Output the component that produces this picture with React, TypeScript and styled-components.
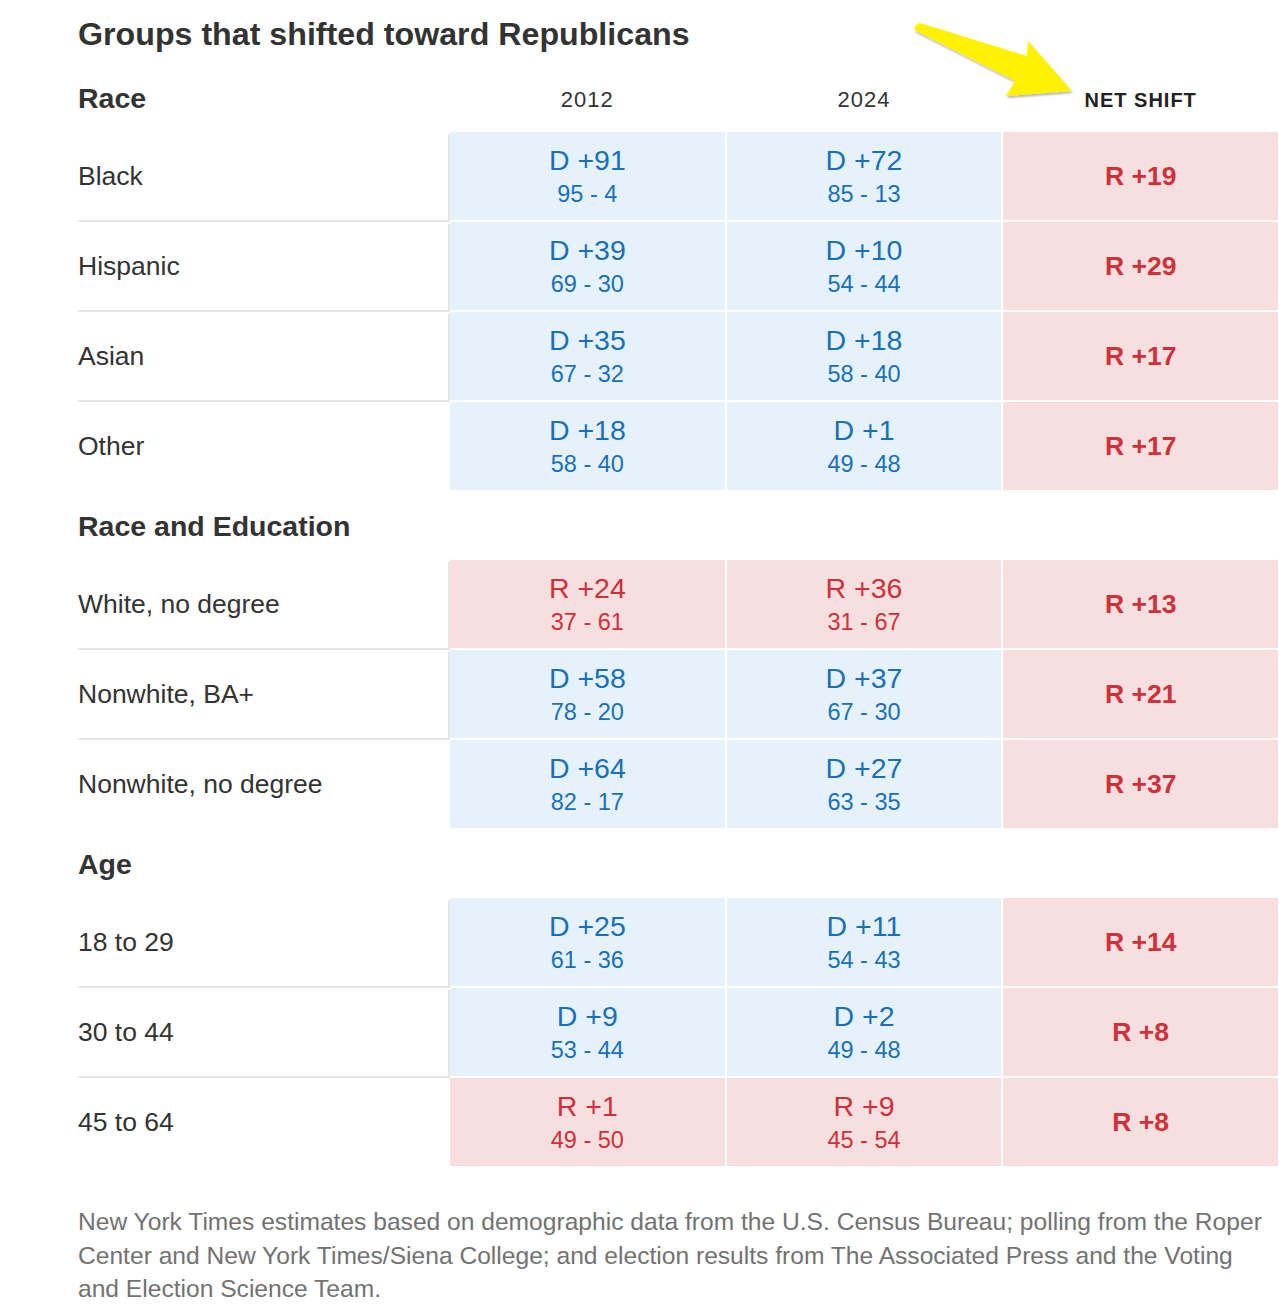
import React from "react";
import styled, { createGlobalStyle } from "styled-components";

const GlobalStyle = createGlobalStyle`
  html, body {
    margin: 0;
    padding: 0;
    background: #ffffff;
    overflow: hidden;
  }
  body {
    font-family: "Liberation Sans", Arial, sans-serif;
    color: #333333;
  }
`;

const BLUE = "#1a70b8";
const RED = "#cf3039";
const BLUE_BG = "#e5f2fb";
const RED_BG = "#f7dfe0";

type Party = "D" | "R";

const Page = styled.div`
  position: relative;
  box-sizing: border-box;
  width: 100%;
  padding: 0 1px 0 78px;
`;

const Title = styled.h1`
  margin: 0;
  padding-top: 14px;
  height: 62px;
  box-sizing: border-box;
  font-size: 32.2px;
  line-height: 40px;
  font-weight: 700;
  color: #333333;
`;

const Grid = styled.div`
  display: grid;
  grid-template-columns: 370px repeat(3, 1fr);
  column-gap: 2px;
`;

const HeaderRow = styled(Grid)`
  height: 70px;
`;

const GroupTitle = styled.h2`
  margin: 0;
  padding-top: 16px;
  font-size: 28.5px;
  line-height: 40px;
  font-weight: 700;
  color: #333333;
`;

const ColHead = styled.div<{ $strong?: boolean }>`
  padding-top: 18px;
  text-align: center;
  line-height: 40px;
  font-size: ${(p) => (p.$strong ? "20px" : "22px")};
  font-weight: ${(p) => (p.$strong ? 700 : 400)};
  letter-spacing: 1px;
  color: ${(p) => (p.$strong ? "#222222" : "#333333")};
`;

const Rows = styled.div`
  display: flex;
  flex-direction: column;
  gap: 2px;
`;

const DataRow = styled(Grid)`
  height: 88px;
`;

const Label = styled.div<{ $divider: boolean }>`
  display: flex;
  align-items: center;
  font-size: 26.5px;
  color: #333333;
  box-shadow: ${(p) =>
    p.$divider ? "0 2px 0 #e6e6e6, 2px 2px 0 #e6e6e6" : "none"};
`;

const Cell = styled.div<{ $party: Party }>`
  background: ${(p) => (p.$party === "D" ? BLUE_BG : RED_BG)};
  color: ${(p) => (p.$party === "D" ? BLUE : RED)};
  display: flex;
  flex-direction: column;
  align-items: center;
  padding-top: 10px;
  box-sizing: border-box;
`;

const Margin = styled.div`
  font-size: 28.5px;
  line-height: 36px;
`;

const Split = styled.div`
  margin-top: 2px;
  font-size: 23.5px;
  line-height: 28px;
`;

const NetCell = styled.div`
  background: ${RED_BG};
  color: ${RED};
  display: flex;
  align-items: center;
  justify-content: center;
  font-size: 26.5px;
  font-weight: 700;
`;

const Footer = styled.p`
  margin: 39px 0 0;
  font-size: 24.6px;
  line-height: 33.5px;
  color: #727272;
`;

const Arrow = styled.svg`
  position: absolute;
  left: 900px;
  top: 0;
  overflow: visible;
`;

type Result = { party: Party; margin: number; dem: number; rep: number };
type Row = { label: string; y2012: Result; y2024: Result; net: number };
type Group = { title: string; rows: Row[] };

const r = (party: Party, margin: number, dem: number, rep: number): Result => ({
  party,
  margin,
  dem,
  rep,
});

const groups: Group[] = [
  {
    title: "Race",
    rows: [
      { label: "Black", y2012: r("D", 91, 95, 4), y2024: r("D", 72, 85, 13), net: 19 },
      { label: "Hispanic", y2012: r("D", 39, 69, 30), y2024: r("D", 10, 54, 44), net: 29 },
      { label: "Asian", y2012: r("D", 35, 67, 32), y2024: r("D", 18, 58, 40), net: 17 },
      { label: "Other", y2012: r("D", 18, 58, 40), y2024: r("D", 1, 49, 48), net: 17 },
    ],
  },
  {
    title: "Race and Education",
    rows: [
      { label: "White, no degree", y2012: r("R", 24, 37, 61), y2024: r("R", 36, 31, 67), net: 13 },
      { label: "Nonwhite, BA+", y2012: r("D", 58, 78, 20), y2024: r("D", 37, 67, 30), net: 21 },
      { label: "Nonwhite, no degree", y2012: r("D", 64, 82, 17), y2024: r("D", 27, 63, 35), net: 37 },
    ],
  },
  {
    title: "Age",
    rows: [
      { label: "18 to 29", y2012: r("D", 25, 61, 36), y2024: r("D", 11, 54, 43), net: 14 },
      { label: "30 to 44", y2012: r("D", 9, 53, 44), y2024: r("D", 2, 49, 48), net: 8 },
      { label: "45 to 64", y2012: r("R", 1, 49, 50), y2024: r("R", 9, 45, 54), net: 8 },
    ],
  },
];

const ResultCell: React.FC<{ res: Result }> = ({ res }) => (
  <Cell $party={res.party}>
    <Margin>
      {res.party} +{res.margin}
    </Margin>
    <Split>
      {res.dem} - {res.rep}
    </Split>
  </Cell>
);

export default function App() {
  return (
    <>
      <GlobalStyle />
      <Page>
        <Arrow width="200" height="110" viewBox="0 0 200 110">
          <defs>
            <filter id="arrowShadow" x="-10%" y="-10%" width="130%" height="140%">
              <feDropShadow dx="1" dy="2" stdDeviation="1.2" floodColor="#000" floodOpacity="0.3" />
            </filter>
          </defs>
          <path
            d="M20 23 L127 56 L128 41 L172 91 L106 96 L115 81 L16 31 Q12 26 20 23 Z"
            fill="#fff200"
            filter="url(#arrowShadow)"
          />
        </Arrow>
        <Title>Groups that shifted toward Republicans</Title>
        {groups.map((g, gi) => (
          <section key={g.title}>
            <HeaderRow>
              <GroupTitle>{g.title}</GroupTitle>
              {gi === 0 && (
                <>
                  <ColHead>2012</ColHead>
                  <ColHead>2024</ColHead>
                  <ColHead $strong>NET SHIFT</ColHead>
                </>
              )}
            </HeaderRow>
            <Rows>
              {g.rows.map((row, ri) => (
                <DataRow key={row.label}>
                  <Label $divider={ri < g.rows.length - 1}>{row.label}</Label>
                  <ResultCell res={row.y2012} />
                  <ResultCell res={row.y2024} />
                  <NetCell>R +{row.net}</NetCell>
                </DataRow>
              ))}
            </Rows>
          </section>
        ))}
        <Footer>
          New York Times estimates based on demographic data from the U.S. Census Bureau; polling from the Roper
          <br />
          Center and New York Times/Siena College; and election results from The Associated Press and the Voting
          <br />
          and Election Science Team.
        </Footer>
      </Page>
    </>
  );
}
